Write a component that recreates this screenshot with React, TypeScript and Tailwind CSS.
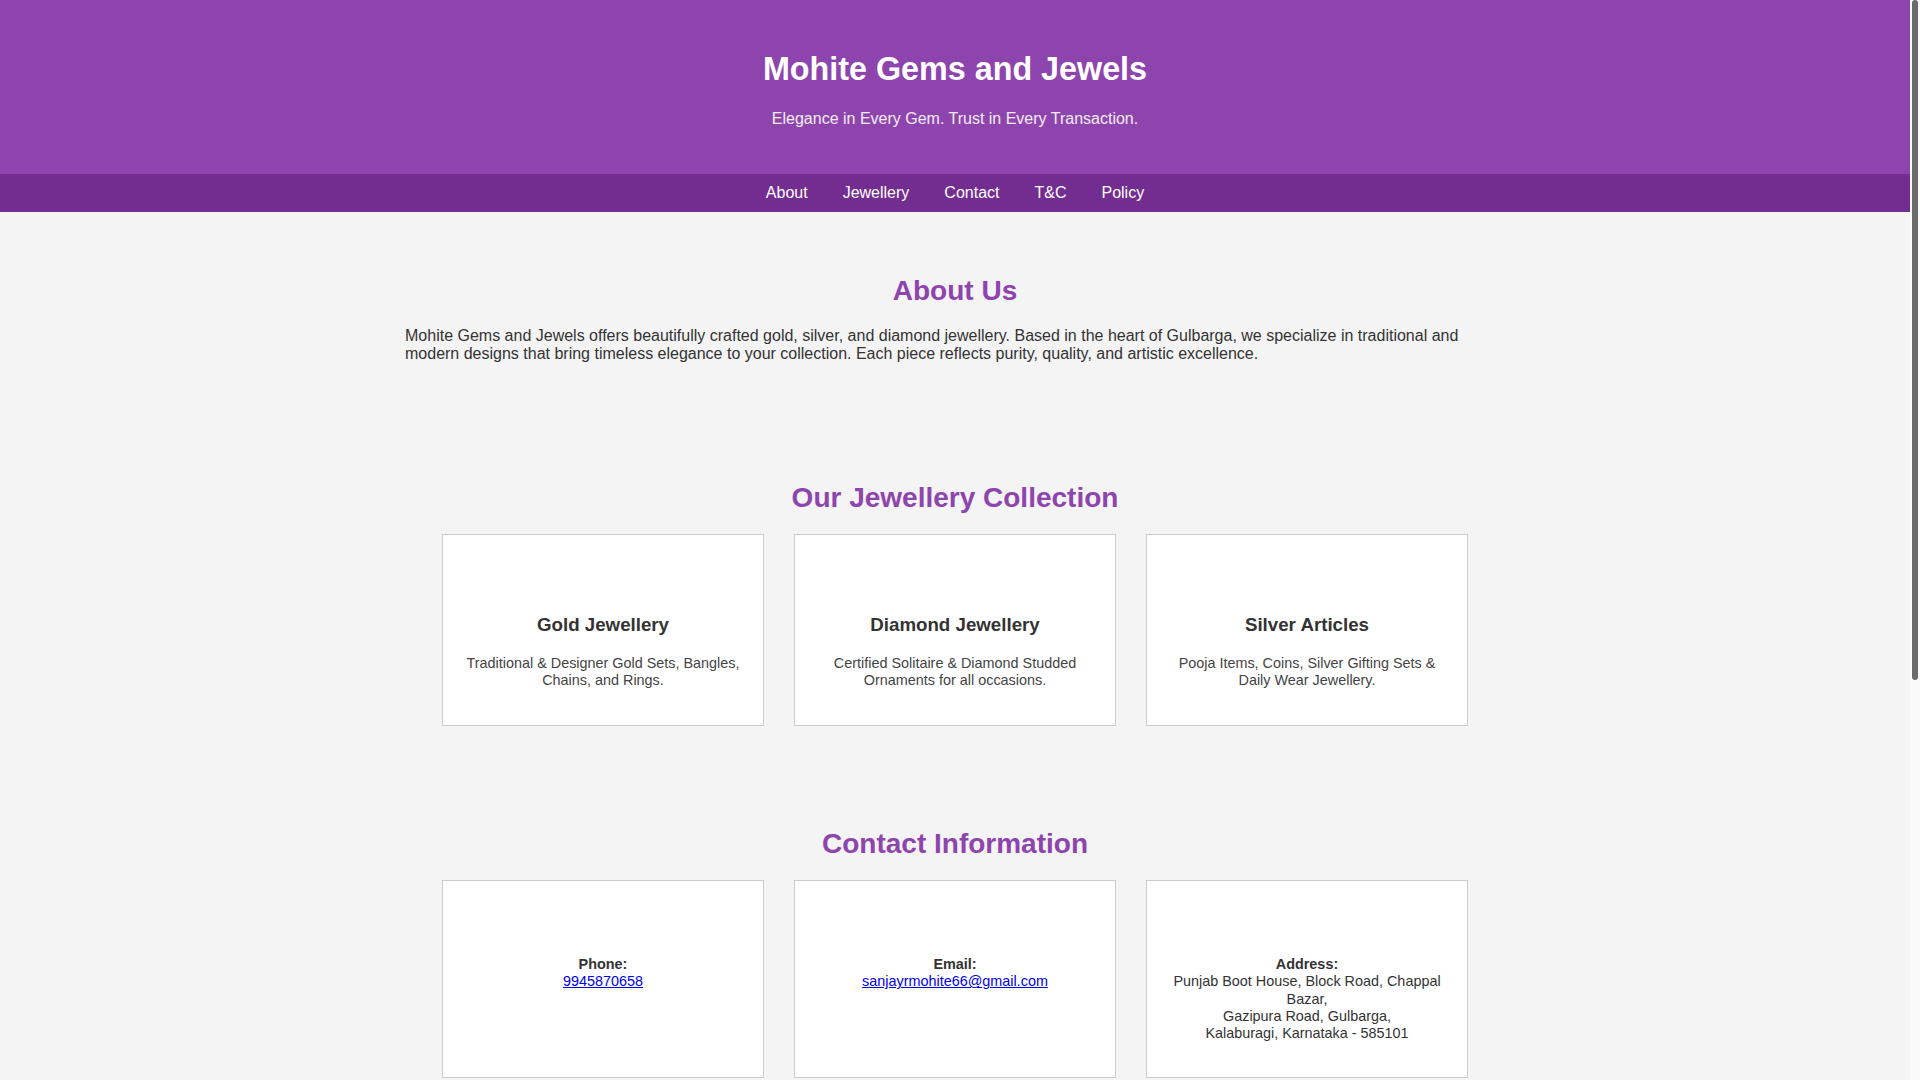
const navItems = ['About', 'Jewellery', 'Contact', 'T&C', 'Policy'];

const collection = [
    {
        title: 'Gold Jewellery',
        text: 'Traditional & Designer Gold Sets, Bangles, Chains, and Rings.',
    },
    {
        title: 'Diamond Jewellery',
        text: 'Certified Solitaire & Diamond Studded Ornaments for all occasions.',
    },
    {
        title: 'Silver Articles',
        text: 'Pooja Items, Coins, Silver Gifting Sets & Daily Wear Jewellery.',
    },
];

const terms = [
    'All prices are subject to the prevailing gold and silver rates on the day of purchase.',
    'Hallmarked jewellery is certified as per BIS standards.',
    'Making charges and taxes are applicable as per store policy.',
    'Orders once placed for custom designs cannot be cancelled.',
];

const policies = [
    'Exchange of jewellery is accepted with the original invoice.',
    'Old gold is accepted at current market value after purity testing.',
    'Customer information is kept confidential and never shared.',
    'Repairs and polishing are delivered within the promised time.',
];

function SectionTitle({ children }: { children: string }) {
    return (
        <h2 className="mt-[23.2px] mb-[20px] text-center text-[28px] font-bold text-[#8e44ad]">
            {children}
        </h2>
    );
}

function Card({ children, spacer = 'h-[40px]' }: { children: React.ReactNode; spacer?: string }) {
    return (
        <div className="w-[322px] border border-[#ccc] bg-white p-5 text-center">
            <div className={spacer} />
            {children}
        </div>
    );
}

export default function App() {
    return (
        <div className="min-h-screen bg-[#fafafa] pr-[10px] font-['Liberation_Sans',Arial,sans-serif] leading-[normal] text-[#333]">
            {/* scrollbar strip like the browser shows it */}
            <div className="fixed top-0 right-0 h-screen w-[10px] bg-[#fafafa]">
                <div className="mx-auto h-[680px] w-[6px] rounded-full bg-[#6b6b6b]" />
            </div>

            <div className="bg-[#f4f4f4]">
                {/* HEADER */}
                <header className="bg-[#8e44ad] py-[30px] text-center text-white">
                    <h1 className="my-[21.44px] text-[32.3px] font-bold">Mohite Gems and Jewels</h1>
                    <p className="mb-[16px] text-[16px] text-white/90">
                        Elegance in Every Gem. Trust in Every Transaction.
                    </p>
                </header>

                {/* NAV */}
                <nav className="bg-[#732d91] py-[10px] text-center text-[16px]">
                    {navItems.map((item) => (
                        <a key={item} href={`#${item.toLowerCase()}`} className="mx-[17.5px] inline text-white">
                            {item}
                        </a>
                    ))}
                </nav>

                {/* ABOUT */}
                <section id="about" className="mx-auto max-w-[1140px] px-5 py-10">
                    <SectionTitle>About Us</SectionTitle>
                    <p className="mb-[16px] text-[16px]">
                        Mohite Gems and Jewels offers beautifully crafted gold, silver, and diamond jewellery.
                        Based in the heart of Gulbarga, we specialize in traditional and modern designs that
                        bring timeless elegance to your collection. Each piece reflects purity, quality, and
                        artistic excellence.
                    </p>
                </section>

                {/* COLLECTION */}
                <section id="jewellery" className="mx-auto max-w-[1140px] px-5 pt-10 pb-[39px]">
                    <SectionTitle>Our Jewellery Collection</SectionTitle>
                    <div className="flex flex-wrap justify-center gap-[30px]">
                        {collection.map((c) => (
                            <Card key={c.title}>
                                <h3 className="my-[18.72px] text-[18.72px] font-bold text-[#333]">{c.title}</h3>
                                <p className="mt-[14.4px] mb-[15.6px] text-[14.4px] leading-[17.2px] text-[#444]">
                                    {c.text}
                                </p>
                            </Card>
                        ))}
                    </div>
                </section>

                {/* CONTACT */}
                <section id="contact" className="mx-auto max-w-[1140px] px-5 py-10">
                    <SectionTitle>Contact Information</SectionTitle>
                    <div className="flex flex-wrap justify-center gap-[30px] text-[14.4px] leading-[17.2px]">
                        <Card spacer="h-[41px]">
                            <p className="my-[14.4px]">
                                <strong>Phone:</strong>
                                <br />
                                <a href="tel:9945870658" className="text-[#0000ee] underline">
                                    9945870658
                                </a>
                            </p>
                        </Card>
                        <Card spacer="h-[41px]">
                            <p className="my-[14.4px]">
                                <strong>Email:</strong>
                                <br />
                                <a href="mailto:sanjayrmohite66@gmail.com" className="text-[#0000ee] underline">
                                    sanjayrmohite66@gmail.com
                                </a>
                            </p>
                        </Card>
                        <Card spacer="h-[41px]">
                            <p className="my-[14.4px]">
                                <strong>Address:</strong>
                                <br />
                                Punjab Boot House, Block Road, Chappal Bazar,
                                <br />
                                Gazipura Road, Gulbarga,
                                <br />
                                Kalaburagi, Karnataka - 585101
                            </p>
                        </Card>
                    </div>
                </section>

                {/* T&C */}
                <section id="t&c" className="mx-auto max-w-[1140px] px-5 py-10">
                    <SectionTitle>Terms &amp; Conditions</SectionTitle>
                    <ul className="ml-10 list-disc text-[16px]">
                        {terms.map((t) => (
                            <li key={t} className="mb-2">
                                {t}
                            </li>
                        ))}
                    </ul>
                </section>

                {/* POLICY */}
                <section id="policy" className="mx-auto max-w-[1140px] px-5 py-10">
                    <SectionTitle>Our Policy</SectionTitle>
                    <ul className="ml-10 list-disc text-[16px]">
                        {policies.map((t) => (
                            <li key={t} className="mb-2">
                                {t}
                            </li>
                        ))}
                    </ul>
                </section>

                {/* FOOTER */}
                <footer className="bg-[#8e44ad] py-6 text-center text-[14px] text-white">
                    © 2024 Mohite Gems and Jewels. All rights reserved.
                </footer>
            </div>
        </div>
    );
}
